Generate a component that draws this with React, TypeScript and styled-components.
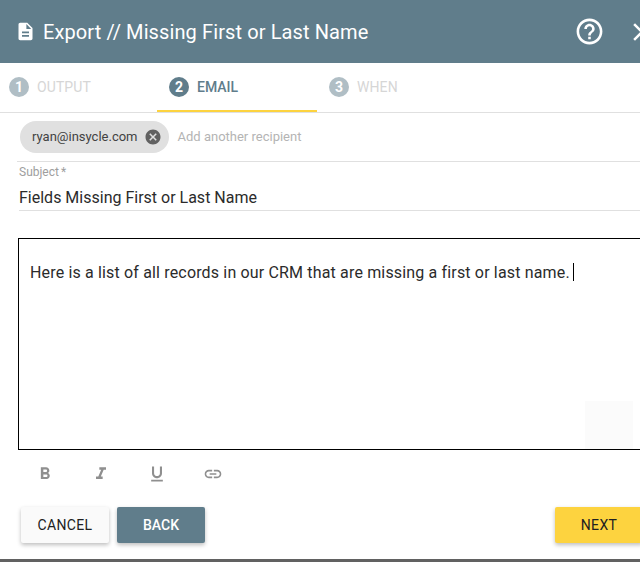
import React from 'react'
import styled, { createGlobalStyle } from 'styled-components'
import {
  MdDescription,
  MdHelpOutline,
  MdClose,
  MdCancel,
  MdFormatBold,
  MdFormatItalic,
  MdFormatUnderlined,
  MdLink,
} from 'react-icons/md'

const GlobalStyle = createGlobalStyle`
  html, body {
    margin: 0;
    padding: 0;
    background: #fff;
    overflow: hidden;
  }
  * {
    box-sizing: border-box;
  }
`

const Viewport = styled.div`
  width: 640px;
  height: 562px;
  overflow: hidden;
  display: flex;
  flex-direction: column;
  font-family: Roboto, 'Liberation Sans', sans-serif;
`

const Dialog = styled.div`
  width: 664px;
  height: 559px;
  flex-shrink: 0;
  background: #fff;
  display: flex;
  flex-direction: column;
`

const BottomEdge = styled.div`
  height: 3px;
  flex-shrink: 0;
  background: #616161;
`

const Header = styled.header`
  height: 63px;
  flex-shrink: 0;
  background: #607d8b;
  color: #fff;
  display: flex;
  align-items: center;
  padding-left: 15px;
`

const Title = styled.h1`
  margin: 0 0 0 7px;
  font-size: 20px;
  font-weight: 400;
  letter-spacing: 0.11px;
  flex: 1;
`

const HelpButton = styled.span`
  display: flex;
  font-size: 31px;
  margin-right: 22px;
`

const CloseButton = styled.span`
  display: flex;
  font-size: 30px;
  margin-right: 7px;
`

const Steps = styled.nav`
  height: 50px;
  flex-shrink: 0;
  display: flex;
  border-bottom: 1px solid #e0e0e0;
`

const Step = styled.div<{ $active?: boolean }>`
  width: 160px;
  height: 49px;
  display: flex;
  align-items: center;
  gap: 8px;
  margin-left: ${p => (p.$active ? '-3px' : '0')};
  margin-right: ${p => (p.$active ? '3px' : '0')};
  padding-left: ${p => (p.$active ? '12px' : '9px')};
  border-bottom: 2px solid ${p => (p.$active ? '#fdd33f' : 'transparent')};
  font-size: 14px;
  font-weight: ${p => (p.$active ? 500 : 400)};
  letter-spacing: ${p => (p.$active ? '0' : '0.1px')};
  color: ${p => (p.$active ? '#607d8b' : '#d6d6d6')};
`

const StepBadge = styled.span<{ $active?: boolean }>`
  width: 20px;
  height: 20px;
  border-radius: 50%;
  background: ${p => (p.$active ? '#607d8b' : '#b0bec5')};
  color: #fff;
  display: flex;
  align-items: center;
  justify-content: center;
  font-size: 14px;
  font-weight: 700;
`

const Recipients = styled.div`
  height: 49px;
  flex-shrink: 0;
  margin-left: 17px;
  padding: 0 0 1px 3px;
  display: flex;
  align-items: center;
  gap: 9px;
  border-bottom: 1px solid #e0e0e0;
`

const Chip = styled.div`
  height: 32px;
  border-radius: 16px;
  background: #e0e0e0;
  display: flex;
  align-items: center;
  padding: 0 7px 0 12px;
  font-size: 13px;
  color: #424242;
`

const ChipRemove = styled.span`
  display: flex;
  font-size: 18px;
  color: #616161;
  margin-left: 6px;
`

const RecipientHint = styled.span`
  font-size: 13px;
  color: #b4b4b4;
`

const SubjectField = styled.div`
  height: 49px;
  flex-shrink: 0;
  margin-left: 19px;
  padding-top: 3px;
  border-bottom: 1px solid #e0e0e0;
`

const SubjectLabel = styled.label`
  display: block;
  font-size: 12px;
  line-height: 14px;
  color: #9e9e9e;
  word-spacing: -1px;
`

const SubjectValue = styled.div`
  margin-top: 10px;
  font-size: 16px;
  line-height: 18px;
  color: #2b2b2b;
`

const Editor = styled.div`
  position: relative;
  height: 212px;
  flex-shrink: 0;
  margin: 27px 0 0 18px;
  border: 1px solid #000;
  padding: 24px 11px;
  font-size: 16px;
  line-height: 20px;
  color: #2b2b2b;
  letter-spacing: 0.16px;
`

const Caret = styled.span`
  display: inline-block;
  width: 1px;
  height: 18px;
  margin-left: 3px;
  background: #000;
  vertical-align: -3px;
`

const ResizeGhost = styled.div`
  position: absolute;
  left: 566px;
  bottom: 0;
  width: 48px;
  height: 48px;
  background: #fbfbfb;
`

const Toolbar = styled.div`
  height: 48px;
  flex-shrink: 0;
  display: flex;
  align-items: center;
  padding-left: 35px;
  gap: 36px;
  color: #8f8f8f;
  font-size: 20px;

  svg {
    display: block;
  }
`

const Footer = styled.footer`
  margin-top: 9px;
  padding: 0 21px;
  display: flex;
  align-items: center;
  gap: 8px;
`

const ActionButton = styled.button<{ $variant: 'plain' | 'back' | 'next' }>`
  width: 88px;
  height: 36px;
  border: none;
  border-radius: 2px;
  font-family: inherit;
  font-size: 14px;
  font-weight: ${p => (p.$variant === 'back' ? 500 : 400)};
  letter-spacing: ${p => (p.$variant === 'back' ? '0' : '0.35px')};
  margin-left: ${p => (p.$variant === 'next' ? 'auto' : '0')};
  box-shadow: 0 2px 4px rgba(0, 0, 0, 0.26);
  background: ${p =>
    p.$variant === 'back' ? '#607d8b' : p.$variant === 'next' ? '#fdd33f' : '#fafafa'};
  color: ${p => (p.$variant === 'back' ? '#fff' : '#212121')};
`

const steps = [
  { n: 1, label: 'OUTPUT' },
  { n: 2, label: 'EMAIL', active: true },
  { n: 3, label: 'WHEN' },
]

export default function App() {
  return (
    <Viewport>
      <GlobalStyle />
      <Dialog>
        <Header>
          <MdDescription size={21} />
          <Title>Export // Missing First or Last Name</Title>
          <HelpButton>
            <MdHelpOutline />
          </HelpButton>
          <CloseButton>
            <MdClose />
          </CloseButton>
        </Header>
        <Steps>
          {steps.map(s => (
            <Step key={s.n} $active={s.active}>
              <StepBadge $active={s.active}>{s.n}</StepBadge>
              {s.label}
            </Step>
          ))}
        </Steps>
        <Recipients>
          <Chip>
            ryan@insycle.com
            <ChipRemove>
              <MdCancel />
            </ChipRemove>
          </Chip>
          <RecipientHint>Add another recipient</RecipientHint>
        </Recipients>
        <SubjectField>
          <SubjectLabel>Subject *</SubjectLabel>
          <SubjectValue>Fields Missing First or Last Name</SubjectValue>
        </SubjectField>
        <Editor>
          Here is a list of all records in our CRM that are missing a first or last name.
          <Caret />
          <ResizeGhost />
        </Editor>
        <Toolbar>
          <MdFormatBold />
          <MdFormatItalic />
          <MdFormatUnderlined />
          <MdLink />
        </Toolbar>
        <Footer>
          <ActionButton $variant="plain">CANCEL</ActionButton>
          <ActionButton $variant="back">BACK</ActionButton>
          <ActionButton $variant="next">NEXT</ActionButton>
        </Footer>
      </Dialog>
      <BottomEdge />
    </Viewport>
  )
}
